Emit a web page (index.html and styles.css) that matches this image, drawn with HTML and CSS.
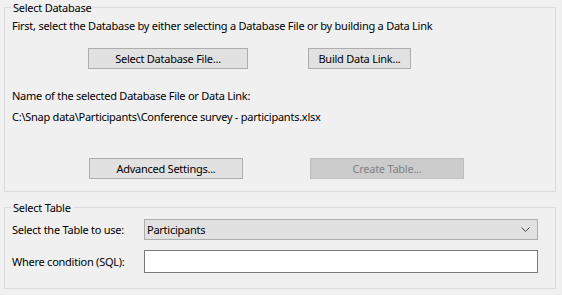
FILE: index.html
```html
<!DOCTYPE html>
<html lang="en">
<head>
  <meta charset="UTF-8" />
  <title>Select Database</title>
  <link rel="stylesheet" href="styles.css">
</head>
<body>
  <fieldset class="group group-db">
    <legend>Select Database</legend>
    <div class="intro">First, select the Database by either selecting a Database File or by building a Data Link</div>

    <div class="btn-row row-top">
      <button class="btn btn-file">Select Database File...</button>
      <button class="btn btn-link">Build Data Link...</button>
    </div>

    <div class="caption">Name of the selected Database File or Data Link:</div>
    <div class="path">C:\Snap data\Participants\Conference survey - participants.xlsx</div>

    <div class="btn-row row-bottom">
      <button class="btn btn-adv">Advanced Settings...</button>
      <button class="btn btn-create" disabled>Create Table...</button>
    </div>
  </fieldset>

  <fieldset class="group group-table">
    <legend>Select Table</legend>
    <div class="field field-combo">
      <label>Select the Table to use:</label>
      <div class="combo">
        <span>Participants</span>
        <svg class="chevron" width="9" height="5" viewBox="0 0 9 5"><path d="M0.5 0.5 L4.5 4.5 L8.5 0.5" fill="none" stroke="#444" stroke-width="1"/></svg>
      </div>
    </div>
    <div class="field field-where">
      <label>Where condition (SQL):</label>
      <input type="text" class="sql" />
    </div>
  </fieldset>
</body>
</html>
```

FILE: styles.css
```css
body {
  margin: 0;
  background: #f0f0f0;
  font-family: 'Noto Sans', 'Open Sans', sans-serif;
  font-size: 11px;
  letter-spacing: -0.25px;
  line-height: 15px;
  color: #000;
  width: 562px;
  height: 295px;
  overflow: hidden;
}
.group {
  margin: 0 6px 0 4px;
  padding: 0 7px;
  border: 1px solid #dcdcdc;
  min-width: 0;
}
.group legend {
  padding: 0 2px;
  margin-left: -1px;
  line-height: 15px;
}
.group-db {
  padding-bottom: 12px;
}
.group-table {
  margin-top: 8px;
  padding-bottom: 15px;
}
.intro {
  margin-top: 3px;
}
.btn-row {
  display: flex;
  height: 21px;
}
.row-top {
  margin-top: 15px;
}
.row-bottom {
  margin-top: 34px;
}
.btn {
  box-sizing: border-box;
  height: 21px;
  padding: 0;
  font: inherit;
  letter-spacing: inherit;
  color: #000;
  background: #e1e1e1;
  border: 1px solid #adadad;
  border-radius: 0;
}
.btn-file {
  margin-left: 76px;
  width: 160px;
}
.btn-link {
  margin-left: 60px;
  width: 103px;
}
.btn-adv {
  margin-left: 77px;
  width: 154px;
}
.btn-create {
  margin-left: 67px;
  width: 154px;
  background: #cccccc;
  border-color: #bfbfbf;
  color: #838383;
}
.caption {
  margin-top: 19px;
}
.path {
  margin-top: 6px;
}
.field {
  display: flex;
  align-items: center;
}
.field label {
  width: 132px;
  flex: none;
}
.field-combo {
  margin-top: 4px;
}
.field-where {
  margin-top: 10px;
}
.combo {
  box-sizing: border-box;
  width: 394px;
  height: 21px;
  display: flex;
  align-items: center;
  justify-content: space-between;
  padding: 0 7px 0 2px;
  background: #e1e1e1;
  border: 1px solid #adadad;
}
.sql {
  box-sizing: border-box;
  width: 394px;
  height: 23px;
  margin: 0;
  padding: 0 3px;
  background: #fff;
  border: 1px solid #7a7a7a;
  border-radius: 0;
  font: inherit;
  outline: none;
}
```
